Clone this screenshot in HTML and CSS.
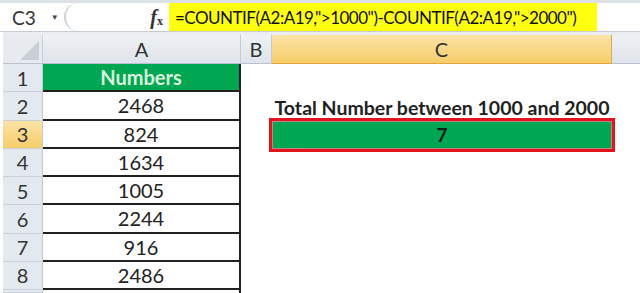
FILE: index.html
```html
<!DOCTYPE html>
<html lang="en">
<head>
    <meta charset="UTF-8">
    <meta name="viewport" content="width=device-width, initial-scale=1.0">
    <title>COUNTIF between two values</title>
    <link rel="stylesheet" href="styles.css">
</head>
<body>
    <div class="formula-bar">
        <div class="name-box">
            <span class="cell-ref">C3</span>
            <span class="arrow">&#9660;</span>
        </div>
        <div class="grip">
            <span class="fx"><i>f</i><sub>x</sub></span>
        </div>
        <div class="formula">=COUNTIF(A2:A19,"&gt;1000")-COUNTIF(A2:A19,"&gt;2000")</div>
    </div>

    <div class="sheet">
        <div class="corner">
            <svg width="22" height="22" viewBox="0 0 22 22"><path d="M21 2 L21 21 L2 21 Z" fill="#c9ced6"/></svg>
        </div>
        <div class="col-head">A</div>
        <div class="col-head">B</div>
        <div class="col-head active">C</div>
        <div class="col-head rest"></div>

        <div class="row-head">1</div>
        <div class="cell a title">Numbers</div>
        <div class="cell"></div>
        <div class="cell"></div>
        <div class="cell"></div>

        <div class="row-head">2</div>
        <div class="cell a">2468</div>
        <div class="cell"></div>
        <div class="cell label">Total Number between 1000 and 2000</div>
        <div class="cell"></div>

        <div class="row-head active">3</div>
        <div class="cell a">824</div>
        <div class="cell"></div>
        <div class="cell result">7</div>
        <div class="cell"></div>

        <div class="row-head">4</div>
        <div class="cell a">1634</div>
        <div class="cell"></div>
        <div class="cell"></div>
        <div class="cell"></div>

        <div class="row-head">5</div>
        <div class="cell a">1005</div>
        <div class="cell"></div>
        <div class="cell"></div>
        <div class="cell"></div>

        <div class="row-head">6</div>
        <div class="cell a">2244</div>
        <div class="cell"></div>
        <div class="cell"></div>
        <div class="cell"></div>

        <div class="row-head">7</div>
        <div class="cell a">916</div>
        <div class="cell"></div>
        <div class="cell"></div>
        <div class="cell"></div>

        <div class="row-head">8</div>
        <div class="cell a">2486</div>
        <div class="cell"></div>
        <div class="cell"></div>
        <div class="cell"></div>

        <div class="row-head"></div>
        <div class="cell a last"></div>
        <div class="cell"></div>
        <div class="cell"></div>
        <div class="cell"></div>
    </div>
</body>
</html>
```

FILE: styles.css
```css
* {
    margin: 0;
    padding: 0;
    box-sizing: border-box;
}

body {
    background: #fff;
    font-family: 'Lato', 'Open Sans', sans-serif;
    color: #222;
    height: 293px;
    overflow: hidden;
}

/* formula bar */
.formula-bar {
    display: flex;
    height: 32px;
    border-top: 3px solid #dde1e6;
    border-bottom: 1px solid #c6ccd4;
    background: #fff;
}

.name-box {
    width: 58px;
    margin-left: 3px;
    display: flex;
    align-items: center;
    font-size: 19px;
    color: #333;
}

.cell-ref {
    margin-left: 9px;
}

.arrow {
    font-size: 8px;
    margin-left: 15px;
    color: #444;
}

.grip {
    width: 105px;
    margin-left: 3px;
    border-left: 2px solid #c9cfd6;
    border-radius: 14px 0 0 14px;
    display: flex;
    align-items: center;
    justify-content: flex-end;
    padding-right: 6px;
}

.fx {
    font-family: 'Liberation Serif', serif;
    font-size: 20px;
    color: #333;
    font-weight: bold;
}

.fx sub {
    font-size: 12px;
    vertical-align: -1px;
}

.formula {
    width: 428px;
    background: #ffff10;
    font-size: 17px;
    letter-spacing: -0.5px;
    white-space: nowrap;
    display: flex;
    align-items: center;
    padding-left: 6px;
    color: #111;
}

/* grid */
.sheet {
    display: grid;
    grid-template-columns: 40px 198px 31px 340px 1fr;
    grid-template-rows: 29px repeat(8, 28.25px) 3px;
    margin-left: 3px;
    border-top: 3px solid #e9ecf0;
}

.corner {
    background: #e7ebf0;
    border-right: 1px solid #c8cfd8;
    border-bottom: 1px solid #b8c2cd;
    display: flex;
    align-items: flex-end;
    justify-content: flex-end;
    padding: 0 2px 2px 0;
}

.col-head {
    background: linear-gradient(#eef1f5, #dfe4ea);
    border-right: 1px solid #c3cad3;
    border-bottom: 1px solid #b8c2cd;
    display: flex;
    align-items: center;
    justify-content: center;
    font-size: 20px;
    color: #333;
}

.col-head.active {
    background: linear-gradient(#fbe3a6, #f7cd6a);
    border-right: 1px solid #d9ae55;
    border-bottom: 1px solid #e2a63c;
}

.col-head.rest {
    border-right: none;
}

.row-head {
    background: #e4e9ef;
    border-right: 1px solid #c3cad3;
    border-bottom: 1px solid #c9d0d9;
    display: flex;
    align-items: center;
    justify-content: center;
    font-size: 20px;
    color: #333;
}

.row-head.active {
    background: linear-gradient(#fbe3a6, #f7cd6a);
}

.cell {
    background: #fff;
    display: flex;
    align-items: center;
    justify-content: center;
    font-size: 20px;
    color: #222;
}

.cell.a {
    border-bottom: 2px solid #222;
    border-right: 2px solid #222;
}

.cell.a.last {
    border-bottom: none;
}

.cell.title {
    background: #00a651;
    color: #d7f3dc;
    font-weight: bold;
    font-size: 20px;
}

.label {
    font-weight: bold;
    font-size: 19.5px;
    white-space: nowrap;
    align-items: flex-end;
    padding-bottom: 2px;
}

/* selected cell sits above its neighbours so the frame is not covered */
.result {
    position: relative;
    z-index: 1;
    background: #00a651;
    font-weight: bold;
    font-size: 19px;
    color: #1a1a1a;
    box-shadow: inset 0 0 0 1px #b98a8a;
    outline: 3px solid #e3141e;
}
```
